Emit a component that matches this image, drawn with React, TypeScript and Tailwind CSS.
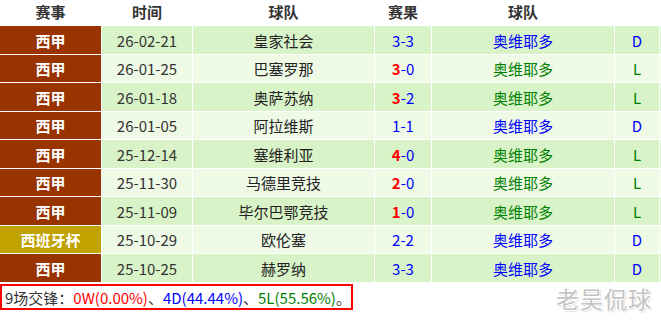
import React from "react";

type Row = {
  league: string;
  cup?: boolean;
  date: string;
  home: string;
  h: string;
  a: string;
  res: "D" | "L";
};

const rows: Row[] = [
  { league: "西甲", date: "26-02-21", home: "皇家社会", h: "3", a: "3", res: "D" },
  { league: "西甲", date: "26-01-25", home: "巴塞罗那", h: "3", a: "0", res: "L" },
  { league: "西甲", date: "26-01-18", home: "奥萨苏纳", h: "3", a: "2", res: "L" },
  { league: "西甲", date: "26-01-05", home: "阿拉维斯", h: "1", a: "1", res: "D" },
  { league: "西甲", date: "25-12-14", home: "塞维利亚", h: "4", a: "0", res: "L" },
  { league: "西甲", date: "25-11-30", home: "马德里竞技", h: "2", a: "0", res: "L" },
  { league: "西甲", date: "25-11-09", home: "毕尔巴鄂竞技", h: "1", a: "0", res: "L" },
  { league: "西班牙杯", cup: true, date: "25-10-29", home: "欧伦塞", h: "2", a: "2", res: "D" },
  { league: "西甲", date: "25-10-25", home: "赫罗纳", h: "3", a: "3", res: "D" },
];

const font = { fontFamily: '"Noto Sans CJK SC", "Noto Sans", sans-serif' };

export default function App() {
  return (
    <div
      className="relative w-[661px] h-[327px] bg-white overflow-hidden text-[15px] text-[#333]"
      style={font}
    >
      <div className="flex flex-col gap-px bg-white">
        <div className="flex gap-px h-[25px] items-center font-bold text-[#333]">
          <div className="w-[101px] text-center">赛事</div>
          <div className="w-[90px] text-center">时间</div>
          <div className="w-[181px] text-center">球队</div>
          <div className="w-[56px] text-center">赛果</div>
          <div className="w-[182px] text-center">球队</div>
          <div className="w-[44px]"></div>
          <div className="flex-1"></div>
        </div>
        {rows.map((r, i) => {
          const bg = i % 2 === 0 ? "bg-[#d9f3c8]" : "bg-[#eef9e6]";
          const hgt = i % 2 === 0 ? "h-[28px]" : "h-[27px]";
          const isL = r.res === "L";
          const teamColor = isL ? "text-[#008000]" : "text-[#0000ff]";
          return (
            <div key={i} className={`flex gap-px ${hgt} leading-none`}>
              <div
                className={`w-[101px] flex items-center justify-center font-bold text-white ${
                  r.cup ? "bg-[#c0a200]" : "bg-[#993300]"
                }`}
              >
                {r.league}
              </div>
              <div className={`w-[90px] flex items-center justify-center text-[#333] ${bg}`}>
                {r.date}
              </div>
              <div className={`w-[181px] flex items-center justify-center text-[#222] ${bg}`}>
                {r.home}
              </div>
              <div className={`w-[56px] flex items-center justify-center ${bg}`}>
                {isL ? (
                  <span className="text-[#ff0000] font-bold">{r.h}</span>
                ) : (
                  <span className="text-[#0000ff]">{r.h}</span>
                )}
                <span className="text-[#0000ff]">-{r.a}</span>
              </div>
              <div className={`w-[182px] flex items-center justify-center ${teamColor} ${bg}`}>
                奥维耶多
              </div>
              <div className={`w-[44px] flex items-center justify-center ${teamColor} ${bg}`}>
                {r.res}
              </div>
              <div className={`flex-1 ${bg}`}></div>
            </div>
          );
        })}
      </div>
      <div className="mt-[2px] w-[353px] h-[26px] border-2 border-[#ff0000] flex items-center pl-[3px] whitespace-nowrap leading-none">
        <span className="text-[#333]">9场交锋：</span>
        <span className="text-[#ff0000]">0W(0.00%)</span>
        <span className="text-[#333]">、</span>
        <span className="text-[#0000ff]">4D(44.44%)</span>
        <span className="text-[#333]">、</span>
        <span className="text-[#008000]">5L(55.56%)</span>
        <span className="text-[#333]">。</span>
      </div>
      <div className="absolute left-[556px] top-[287px] text-[23px] leading-none tracking-[1px] text-[#c4c4c4] [text-shadow:1px_1px_0_#fff,-1px_-1px_0_#fff,1px_-1px_0_#fff,-1px_1px_0_#fff,1px_1px_2px_#999]">
        老吴侃球
      </div>
    </div>
  );
}
